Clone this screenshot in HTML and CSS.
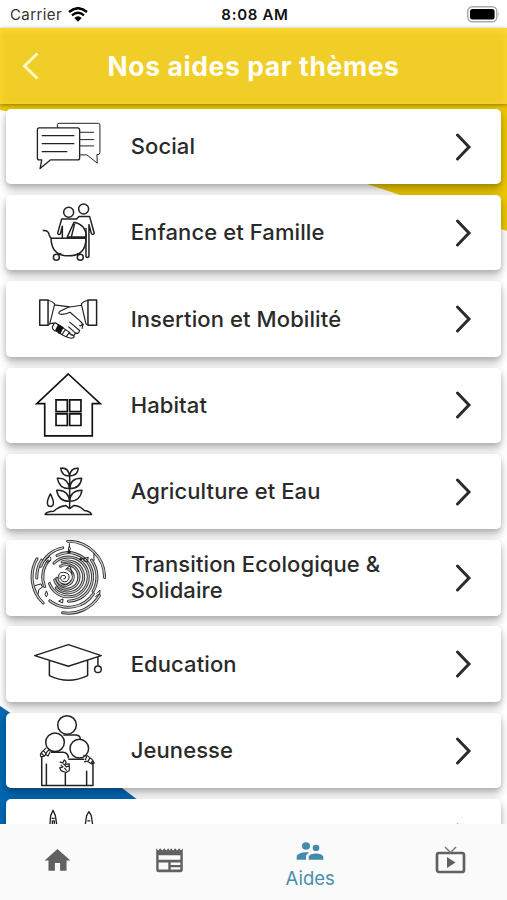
FILE: index.html
```html
<!DOCTYPE html>
<html lang="fr">
<head>
<meta charset="utf-8">
<title>Nos aides par thèmes</title>
<link rel="stylesheet" href="styles.css">
</head>
<body>
<div class="status">
  <div class="carrier"><span>Carrier</span>
    <svg width="20" height="15" viewBox="0 0 60 45" fill="none" stroke="#000" stroke-width="7"><path d="M3 15Q30-8 57 15M12 25Q30 9 48 25"/><path d="M19 33Q30 23 41 33L30 44Z" fill="#000" stroke="none"/></svg>
  </div>
  <span class="time">8:08 AM</span>
  <svg class="battery" width="33" height="17" viewBox="0 0 33 17"><rect x=".8" y=".8" width="29" height="15" rx="4.5" fill="#fff" stroke="#aaa" stroke-width="1.5"/><rect x="3" y="3" width="24.6" height="10.6" rx="2.5"/><path d="M31.2 6q1.5 2.3 0 4.6z" fill="#999"/></svg>
</div>
<header class="header">
  <svg class="back" width="18" height="28" viewBox="0 0 18 28" fill="none" stroke="#fff6c8" stroke-width="3"><path d="M15.500 1.500L2.500 14l13 12.500"/></svg>
  <h1>Nos aides par thèmes</h1>
</header>
<main class="content">
  <svg class="backdrop" width="507" height="720" viewBox="0 104 507 720"><path fill="#ebc800" d="M0 104H507V231L400 195L367 184L0 110Z"/><path fill="#0068b3" d="M0 706L122 788L170 824H0Z"/></svg>
  <div class="card"><svg class="icon" viewBox="90 27 228 227"><path d="M172 84V74q0-4 5-4H295q5 0 5 5V158q0 6-6 6h-3l1 26-31-25H240"/><path d="M240 97h42M240 119h42M240 138h42"/><path fill="#fff" stroke-width="4" d="M117 84H233q6 0 6 6v84q0 6-6 6H151L120 206l5-26h-8q-5 0-5-6V90q0-6 5-6Z"/><path stroke-width="4" d="M125 107h98M125 131h98M125 155h77"/></svg><span>Social</span><svg class="chev" viewBox="0 0 17 28"><path d="M2.500 2L14 14L2.500 26"/></svg></div>
  <div class="card"><svg class="icon heavy" viewBox="90 286 228 227"><circle cx="206" cy="338" r="15"/><circle cx="251" cy="328" r="15"/><path d="M187 415V380l-6 23q-7 4-8-3l12-42H232M187 390v25M229 358l8-7H269l14 50q-5 7-9 0l-7-26V471q-5 6-9 0V385"/><path d="M202 412L222 368q36 7 37 44ZM214 412l10-40M128 393q18-2 20 15l5 8H258q0 53-52 53T153 416M184 462l-10 3M230 462l9 4"/><circle cx="169" cy="473" r="9"/><circle cx="241" cy="473" r="9"/></svg><span>Enfance et Famille</span><svg class="chev" viewBox="0 0 17 28"><path d="M2.500 2L14 14L2.500 26"/></svg></div>
  <div class="card"><svg class="icon" viewBox="90 4 228 227"><path stroke-width="4.500" d="M119 61h25v76h-25ZM264 61h26v76h-26Z"/><path stroke-width="3.500" d="M144 62q10 1 20 11L149 133l-5 3M264 62q-12 2-20 11l14 60 6 3M162 76l48 6M245 77l-40 6-25 12q-8 6 2 9 16 1 28-6l30 26q12 9 2 15l-4-2M150 132l17-2 44 30M250 132l-4 16M163 130l-6 12q0 10 12 13l20 12q10 6 24 9 12-1 9-7l-17-9M208 127l31 26q-3 12-13 7l-21-19M226 160q-2 12-14 5M181 154l-5 9M197 149l-12 17M209 157l-10 14"/><path fill="#111" stroke="none" d="M175 133l16 10-9 18-17-9Z"/></svg><span>Insertion et Mobilité</span><svg class="chev" viewBox="0 0 17 28"><path d="M2.500 2L14 14L2.500 26"/></svg></div>
  <div class="card"><svg class="icon house" viewBox="90 263 228 227"><path d="M205 281L301 370H277V467H134V370H110ZM168 359h34v35h-34ZM209 359h34v35h-34ZM168 401h34v35h-34ZM209 401h34v35h-34Z"/></svg><span>Habitat</span><svg class="chev" viewBox="0 0 17 28"><path d="M2.500 2L14 14L2.500 26"/></svg></div>
  <div class="card"><svg class="icon heavy" viewBox="90 12 228 227"><path d="M209 70V174M209 78Q204 51 182 55q4 24 27 23ZM209 78q3-25 26-23-2 23-26 23ZM209 116Q204 82 172 85q6 32 37 31ZM209 116q2-32 36-31-4 31-36 31ZM209 154Q204 118 170 121q6 34 39 33ZM209 154q3-34 37-33-5 33-37 33ZM151 132q-9 18-9 26 0 12 9 12t9-12q0-8-9-26ZM135 194q5-10 26-10 17-15 37-17l11 9 12-9q18 0 32 15 18 2 22 12Z"/></svg><span>Agriculture et Eau</span><svg class="chev" viewBox="0 0 17 28"><path d="M2.500 2L14 14L2.500 26"/></svg></div>
  <div class="card"><svg class="icon" viewBox="90 271 228 227">
    <defs><g id="rings" stroke-linecap="round">
      <circle cx="205" cy="384" r="109" pathLength="360" stroke-dasharray="91 269" transform="rotate(269 205 384)"/>
      <circle cx="205" cy="382" r="109" pathLength="360" stroke-dasharray="68 292" transform="rotate(31 205 382)"/>
      <circle cx="205" cy="382" r="109" pathLength="360" stroke-dasharray="76 284" transform="rotate(134 205 382)"/>
      <circle cx="205" cy="382" r="95" pathLength="360" stroke-dasharray="34 326" transform="rotate(178 205 382)"/>
      <circle cx="205" cy="382" r="89" pathLength="360" stroke-dasharray="58 302" transform="rotate(201 205 382)"/>
      <circle cx="205" cy="382" r="91" pathLength="360" stroke-dasharray="94 266" transform="rotate(34 205 382)"/>
      <circle cx="205" cy="382" r="77" pathLength="360" stroke-dasharray="60 300" transform="rotate(158 205 382)"/>
      <circle cx="205" cy="382" r="86" pathLength="360" stroke-dasharray="66 294" transform="rotate(-36 205 382)"/>
      <circle cx="205" cy="382" r="73" pathLength="360" stroke-dasharray="207 153" transform="rotate(242 205 382)"/>
      <circle cx="205" cy="382" r="60" pathLength="360" stroke-dasharray="295 65" transform="rotate(224 205 382)"/>
      <circle cx="203" cy="382" r="48" pathLength="360" stroke-dasharray="245 115" transform="rotate(250 203 382)"/>
      <circle cx="200" cy="382" r="37" pathLength="360" stroke-dasharray="285 75" transform="rotate(240 200 382)"/>
      <circle cx="195" cy="382" r="25" pathLength="360" stroke-dasharray="240 120" transform="rotate(290 195 382)"/>
    </g></defs>
    <use href="#rings" stroke="#333" stroke-width="9"/><use href="#rings" stroke="#ccc" stroke-width="3.500"/>
    <path d="M177 388q-5-20 13-20 20 1 17 18-5 15-20 9-10-8-3-16 10-5 13 3 0 7-7 6M184 402q18 10 29-10M196 360l14-12 7 27M208 281v8q-5 9-1 17 8-8 1-17M136 332l12-11q8 2 2 14l-9 3ZM240 330l25-7-3 14-12-4M282 310v24M105 408l18-5 4 10-11 7-2 15M139 424q-8 12 0 18 8-7 0-18M176 455l13-7-1 12ZM290 432l10-10v9l-14 11"/>
    <circle cx="207" cy="307" r="4" fill="#222"/><circle cx="242" cy="329" r="3" fill="#222"/></svg><span>Transition Ecologique &amp;<br>Solidaire</span><svg class="chev" viewBox="0 0 17 28"><path d="M2.500 2L14 14L2.500 26"/></svg></div>
  <div class="card"><svg class="icon" viewBox="90 19 228 227"><g stroke-width="4.500"><path d="M104 108L205 75L304 108L205 140ZM148 123V168Q205 196 263 168V123M294 112V138"/><circle cx="294" cy="149" r="10"/></g></svg><span>Education</span><svg class="chev" viewBox="0 0 17 28"><path d="M2.500 2L14 14L2.500 26"/></svg></div>
  <div class="card"><svg class="icon" viewBox="90 278 228 227"><g stroke-width="4.500"><circle cx="201" cy="314" r="28"/><circle cx="165" cy="366" r="28"/><circle cx="238" cy="385" r="28"/><path d="M190 344h39q12 2 12 12M153 396h37q15 2 15 18M125 408V496H279V425M139 430v66M260 452v44M196 458v38M205 417h48"/><path stroke-width="3.500" d="M139 382l-15 15q-6 9 0 13l10-3 8-14 7-5M130 391l9 11M124 399l8 8M151 393l-7 14-8-5M250 405l13 2 15 12 5 10-8 2-13-8-10 2M260 409l-4 11M270 413l-7 12M279 420l-7 10M179 425l9 3 5-9q8 5 3 13l12-1v20l-9 6-15-5-5-9 10-3-7-6M190 430l9 10 8-3M193 443l7 8"/></g></svg><span>Jeunesse</span><svg class="chev" viewBox="0 0 17 28"><path d="M2.500 2L14 14L2.500 26"/></svg></div>
  <div class="card"><svg class="icon heavy" viewBox="90 537 228 227"><path stroke-width="4" d="M149 620l3-33 7-16 7 16 5 33M155 595h9M157 620v-17h6v17M255 620l5-33 7-12 7 12 5 33M262 603h9"/></svg><span></span><svg class="chev" viewBox="0 0 17 28"><path d="M2.500 2L14 14L2.500 26"/></svg></div>
</main>
<nav class="nav">
  <div class="tab"><svg width="31" height="31" viewBox="0 0 24 24"><path d="M10 20v-6h4v6h5v-8h3L12 3 2 12h3v8z"/></svg></div>
  <div class="tab"><svg width="29" height="31" viewBox="0 0 24 24" preserveAspectRatio="none"><path fill-rule="evenodd" d="M1 2.500l1.700 1.700L4.300 2.500 6 4.200l1.700-1.700 1.600 1.700L11 2.500l1 1.700 1.300-1.700L15 4.200l1.700-1.700 1.600 1.700L20 2.500l1.500 1.700L23 2.500v16.500q0 2-2 2H3q-2 0-2-2zM3 8v3.500h18V8zM3 13.500V19h8v-5.500zM13 13.500v2h8v-2zM13 17.200V19h8v-1.800z"/></svg></div>
  <div class="tab active"><svg width="32" height="30" viewBox="0 0 24 24" preserveAspectRatio="none"><path d="M16.500 12A2.500 2.500 0 1 0 14 9.500 2.500 2.500 0 0 0 16.500 12zM9 11A3 3 0 1 0 6 8a3 3 0 0 0 3 3zm7.500 3c-1.830 0-5.500.92-5.500 2.750V19h11v-2.250C22 14.920 18.330 14 16.500 14zM9 13c-2.330 0-7 1.170-7 3.500V19h7v-2.250c0-.85.33-2.340 2.370-3.470C10.500 13.100 9.660 13 9 13z"/></svg><span>Aides</span></div>
  <div class="tab"><svg width="31" height="31" viewBox="0 0 31 31"><rect x="2" y="8" width="27" height="19" rx="2" fill="none" stroke="#616161" stroke-width="2.700"/><path d="M12 12v11l8.500-5.500z"/><path fill="none" stroke="#777" stroke-width="1.500" d="M10 2l5.500 5.500L21 2"/></svg></div>
</nav>
</body>
</html>
```

FILE: styles.css
```css
* { box-sizing: border-box; }
body {
  margin: 0;
  width: 507px;
  height: 900px;
  display: flex;
  flex-direction: column;
  overflow: hidden;
  background: #fff;
  font-family: Inter, "Liberation Sans", sans-serif;
  color: #2a2a2a;
}
.status {
  height: 28px;
  flex: none;
  display: grid;
  grid-template-columns: 1fr auto 1fr;
  align-items: center;
  padding: 1px 7px 0 10px;
  font-size: 15px;
}
.carrier { display: flex; align-items: center; gap: 6px; color: #333; letter-spacing: .4px; }
.time { font-weight: 600; font-size: 15px; letter-spacing: .7px; color: #111; }
.battery { justify-self: end; }
.header {
  height: 76px;
  flex: none;
  display: grid;
  grid-template-columns: 54px 1fr 54px;
  align-items: center;
  background: #f1cd27;
  box-shadow: inset 0 3px 7px #ffda30, 0 1px 4px rgba(60, 45, 0, .55);
  z-index: 1;
}
.back { margin-left: 22px; }
h1 { margin: 0; padding-bottom: 1px; text-align: center; color: #fffef4; font-size: 26.500px; font-weight: 700; line-height: 30px; letter-spacing: .6px; }
.content {
  position: relative;
  flex: 1;
  min-height: 0;
  overflow: hidden;
  padding: 4.800px 5.800px 0 6.200px;
  display: flex;
  flex-direction: column;
  gap: 10.900px;
}
.backdrop { position: absolute; left: 0; top: 0; }
.card {
  position: relative;
  flex: none;
  height: 75.400px;
  display: grid;
  grid-template-columns: 76px 1fr 17px;
  column-gap: 25px;
  align-items: center;
  padding: 0 29px 0 23.500px;
  background: #fff;
  border-radius: 5px;
  font-size: 22px;
  font-weight: 530;
  line-height: 26px;
  letter-spacing: .1px;
}
.card::before {
  content: "";
  position: absolute;
  inset: 0;
  z-index: -1;
  border-radius: 5px;
  box-shadow: 0 3px 5px rgba(0, 0, 0, .14), 0 7px 9px rgba(0, 0, 0, .14), 0 2px 12px rgba(0, 0, 0, .1);
}
.content { z-index: 0; }
.backdrop { z-index: -2; }
.card > span { padding-bottom: 1px; }
.icon { width: 76px; height: 75.500px; fill: none; stroke: #222; stroke-width: 3; stroke-linejoin: round; }
.heavy { stroke-width: 4.500; }
.house { stroke: #111; stroke-width: 5; stroke-linejoin: miter; }
.chev { width: 17px; height: 28px; fill: none; stroke: #2b2b2b; stroke-width: 3; stroke-linecap: round; }
.nav {
  flex: none;
  height: 76px;
  display: flex;
  padding-left: 1px;
  background: #fafafa;
  z-index: 1;
}
.tab { flex: 2; display: flex; flex-direction: column; align-items: center; padding-top: 21px; }
.tab svg { fill: #616161; }
.active { flex: 3; padding-top: 12px; color: #4b8eae; font-size: 18.500px; line-height: 25px; letter-spacing: 0; }
.active svg { fill: #418bad; }
```
